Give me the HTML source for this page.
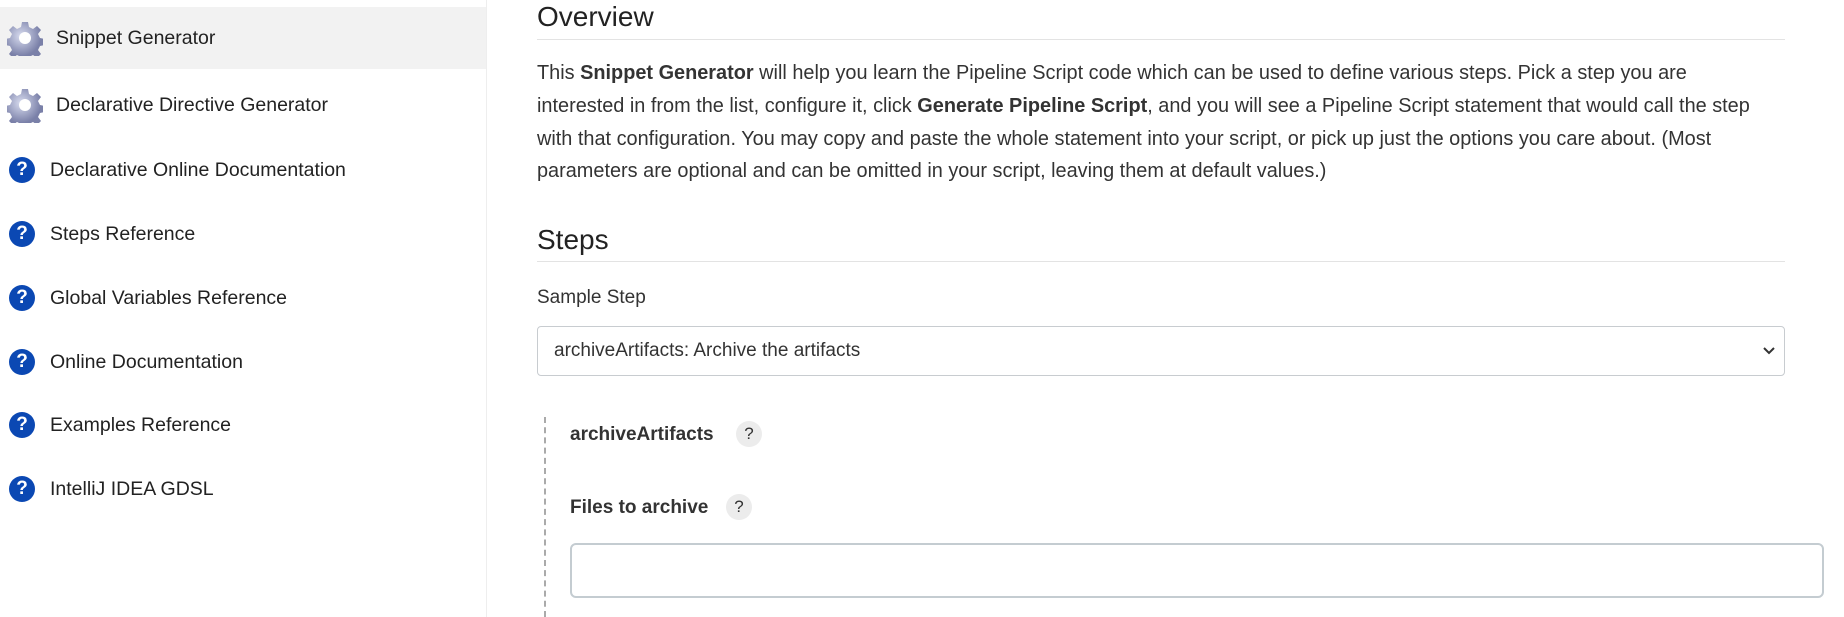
<!DOCTYPE html>
<html><head><meta charset="utf-8"><style>
*{box-sizing:border-box;margin:0;padding:0}
body{width:1844px;height:617px;overflow:hidden;background:#fff;font-family:"Liberation Sans",sans-serif;color:#333;position:relative}
.side{position:absolute;left:0;top:0;width:487px;height:617px;border-right:1px solid #eee}
.item{position:absolute;left:0;width:486px;height:62px;font-size:19.5px;color:#222}
.item.sel{background:#f2f2f2}
.item svg{position:absolute}
.item span{position:absolute}
.q{position:absolute;width:26px;height:26px;border-radius:50%;background:#0b48b3;color:#fff;font-weight:bold;font-size:19px;text-align:center;line-height:26px}
.main{position:absolute;left:537px;top:0;width:1248px}
h2{position:absolute;font-weight:normal;font-size:28px;color:#222}
.hr{position:absolute;left:0;width:1248px;height:1px;background:#e3e3e3}
p{position:absolute;top:57px;left:0;font-size:19.9px;line-height:32.8px;white-space:nowrap}
.lbl{position:absolute;font-size:19px}
.sel-box{position:absolute;left:0;top:326px;width:1248px;height:50px;border:1px solid #c8ccd0;border-radius:4px;font-size:19px;padding-left:16px;line-height:48px}
.badge{position:absolute;width:26px;height:26px;border-radius:50%;background:#ececec;font-size:17px;text-align:center;line-height:26px;color:#333}
</style></head><body>
<div class="side">
  <div class="item sel" style="top:7px">
    <svg style="left:7px;top:13px" width="36" height="36" viewBox="0 0 36 36"><defs><radialGradient id="g" cx="40%" cy="35%"><stop offset="0" stop-color="#d8dcef"/><stop offset="1" stop-color="#7a80a8"/></radialGradient></defs><path fill="url(#g)" d="M15 2h6l1 5 4 2 4-3 4 4-3 4 2 4 5 1v6l-5 1-2 4 3 4-4 4-4-3-4 2-1 5h-6l-1-5-4-2-4 3-4-4 3-4-2-4-5-1v-6l5-1 2-4-3-4 4-4 4 3 4-2z"/><circle cx="18" cy="18" r="6" fill="#fff"/></svg>
    <span style="left:56px;top:20px">Snippet Generator</span></div>
  <div class="item" style="top:74px">
    <svg style="left:7px;top:13px" width="36" height="36" viewBox="0 0 36 36"><path fill="url(#g)" d="M15 2h6l1 5 4 2 4-3 4 4-3 4 2 4 5 1v6l-5 1-2 4 3 4-4 4-4-3-4 2-1 5h-6l-1-5-4-2-4 3-4-4 3-4-2-4-5-1v-6l5-1 2-4-3-4 4-4 4 3 4-2z"/><circle cx="18" cy="18" r="6" fill="#fff"/></svg>
    <span style="left:56px;top:20px">Declarative Directive Generator</span></div>
  <div class="item" style="top:139px"><div class="q" style="left:9px;top:18px">?</div><span style="left:50px;top:20px">Declarative Online Documentation</span></div>
  <div class="item" style="top:203px"><div class="q" style="left:9px;top:18px">?</div><span style="left:50px;top:20px">Steps Reference</span></div>
  <div class="item" style="top:267px"><div class="q" style="left:9px;top:18px">?</div><span style="left:50px;top:20px">Global Variables Reference</span></div>
  <div class="item" style="top:331px"><div class="q" style="left:9px;top:18px">?</div><span style="left:50px;top:20px">Online Documentation</span></div>
  <div class="item" style="top:394px"><div class="q" style="left:9px;top:18px">?</div><span style="left:50px;top:20px">Examples Reference</span></div>
  <div class="item" style="top:458px"><div class="q" style="left:9px;top:18px">?</div><span style="left:50px;top:20px">IntelliJ IDEA GDSL</span></div>
</div>
<div class="main">
  <h2 style="top:1px">Overview</h2>
  <div class="hr" style="top:39px"></div>
  <p>This <b>Snippet Generator</b> will help you learn the Pipeline Script code which can be used to define various steps. Pick a step you are<br>interested in from the list, configure it, click <b>Generate Pipeline Script</b>, and you will see a Pipeline Script statement that would call the step<br>with that configuration. You may copy and paste the whole statement into your script, or pick up just the options you care about. (Most<br>parameters are optional and can be omitted in your script, leaving them at default values.)</p>
  <h2 style="top:224px">Steps</h2>
  <div class="hr" style="top:261px"></div>
  <div class="lbl" style="left:0;top:287px">Sample Step</div>
  <div class="sel-box">archiveArtifacts: Archive the artifacts
    <svg style="position:absolute;right:8px;top:18px" width="14" height="12" viewBox="0 0 14 12"><path d="M2 3l5 5 5-5" fill="none" stroke="#333" stroke-width="2"/></svg></div>
</div>
<div style="position:absolute;left:544px;top:417px;height:200px;border-left:2px dashed #aaa"></div>
<div class="lbl" style="left:570px;top:424px;font-weight:bold">archiveArtifacts</div>
<div class="badge" style="left:736px;top:421px">?</div>
<div class="lbl" style="left:570px;top:497px;font-weight:bold">Files to archive</div>
<div class="badge" style="left:726px;top:494px">?</div>
<div style="position:absolute;left:570px;top:543px;width:1254px;height:55px;border:2px solid #c4ccd1;border-radius:6px"></div>
</body></html>
